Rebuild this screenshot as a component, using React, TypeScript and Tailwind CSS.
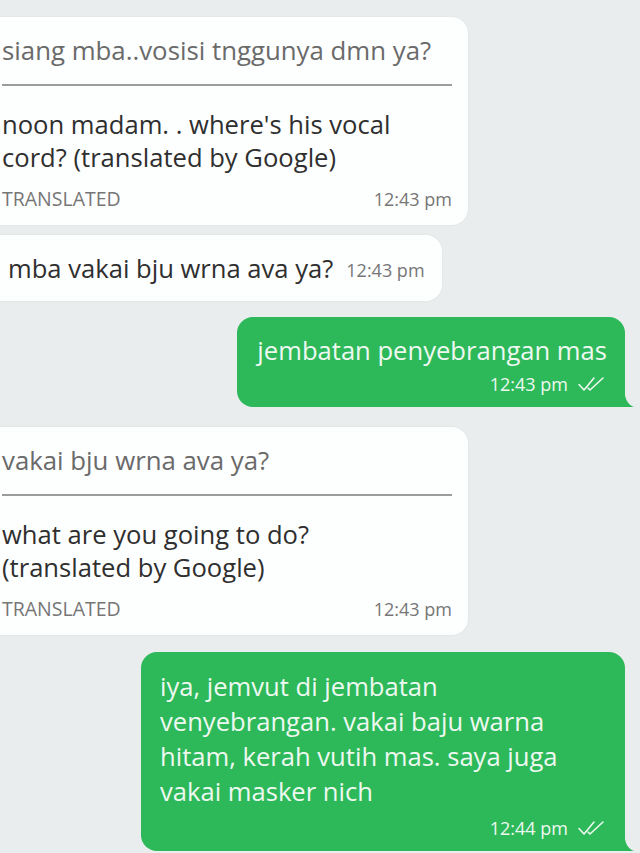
const font = { fontFamily: '"Open Sans", "Noto Sans", sans-serif' };

function Checks() {
  return (
    <svg width="30" height="16" viewBox="0 0 30 16" fill="none" stroke="currentColor" strokeWidth="1.6" strokeLinecap="round" strokeLinejoin="round">
      <path d="M2 8.5 L7 14 L17 2" />
      <path d="M11 12 L13 14 L26 2" />
    </svg>
  );
}

function Tail() {
  return (
    <svg className="absolute left-full bottom-0" width="10" height="12" viewBox="0 0 10 12">
      <path d="M0 0 C1 6 4 10 9 12 L0 12 Z" fill="#2db85a" />
    </svg>
  );
}

function Translated({ original, lines }: { original: string; lines: string[] }) {
  return (
    <div className="-ml-4 w-[484px] rounded-2xl bg-[#fdfefe] pl-[18px] pr-4 pt-[17px] pb-[14px] shadow-[0_0_2px_rgba(0,0,0,0.08)]">
      <p className="text-[25.8px] leading-[33px] text-[#6a6a6a]">{original}</p>
      <div className="mt-[17px] h-[2px] bg-[#9c9c9c]" />
      <div className="mt-[22px] text-[25.6px] leading-[33px] text-[#2f2f2f]">
        {lines.map((l) => (
          <p key={l}>{l}</p>
        ))}
      </div>
      <div className="mt-[13px] flex items-center justify-between leading-6 text-[#767676]">
        <span className="text-[19.5px]">TRANSLATED</span>
        <span className="text-[18px]">12:43 pm</span>
      </div>
    </div>
  );
}

export default function App() {
  return (
    <div className="min-h-[853px] w-[640px] overflow-hidden bg-[#e9edee] pt-[17px]" style={font}>
      <Translated
        original="siang mba..vosisi tnggunya dmn ya?"
        lines={["noon madam. . where's his vocal", "cord? (translated by Google)"]}
      />

      <div className="mt-[10px] -ml-4 flex w-fit items-end rounded-2xl bg-[#fdfefe] pl-6 pr-[17px] pt-[17px] pb-4 shadow-[0_0_2px_rgba(0,0,0,0.08)]">
        <span className="text-[25.6px] leading-[33px] text-[#2f2f2f]">mba vakai bju wrna ava ya?</span>
        <span className="ml-[13px] mb-[3px] text-[18px] leading-6 text-[#767676]">12:43 pm</span>
      </div>

      <div className="mt-4 flex justify-end pr-[15px]">
        <div className="relative w-[388px] rounded-2xl rounded-br-none bg-[#2db85a] pl-5 pr-[18px] pt-[17px] pb-[11px] text-[#edf9f0]">
          <p className="text-right text-[25.6px] leading-[33px]">jembatan penyebrangan mas</p>
          <div className="mt-[5px] flex items-center justify-end gap-[9px] text-[18px] leading-6">
            <span>12:43 pm</span>
            <Checks />
          </div>
          <Tail />
        </div>
      </div>

      <div className="mt-5">
        <Translated
          original="vakai bju wrna ava ya?"
          lines={["what are you going to do?", "(translated by Google)"]}
        />
      </div>

      <div className="mt-[17px] flex justify-end pr-[15px]">
        <div className="relative w-[484px] rounded-2xl rounded-br-none bg-[#2db85a] pl-[19px] pr-[18px] pt-[17px] pb-[11px] text-[#edf9f0]">
          <div className="text-[25.6px] leading-[35px]">
            <p>iya, jemvut di jembatan</p>
            <p>venyebrangan. vakai baju warna</p>
            <p>hitam, kerah vutih mas. saya juga</p>
            <p>vakai masker nich</p>
          </div>
          <div className="mt-[7px] flex items-center justify-end gap-[9px] text-[18px] leading-6">
            <span>12:44 pm</span>
            <Checks />
          </div>
          <Tail />
        </div>
      </div>
    </div>
  );
}
